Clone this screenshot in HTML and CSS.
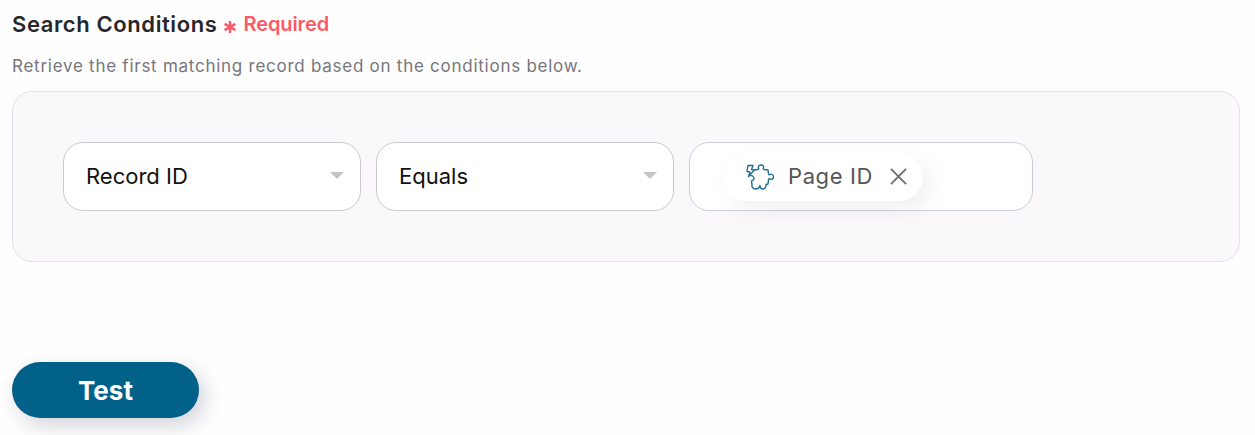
FILE: index.html
```html
<!DOCTYPE html>
<html lang="en">
<head>
<meta charset="utf-8">
<title>Search Conditions</title>
<link rel="stylesheet" href="styles.css">
</head>
<body>
<main class="page">
  <div class="heading">
    <h2 class="title">Search Conditions</h2>
    <span class="required"><svg class="asterisk" viewBox="0 0 14 14" aria-hidden="true"><path d="M7 1v12M1.600 3.900l10.800 6.200M12.400 3.900L1.600 10.100"/></svg>Required</span>
  </div>
  <p class="hint">Retrieve the first matching record based on the conditions below.</p>
  <section class="panel">
    <div class="select"><span>Record ID</span><i class="caret"></i></div>
    <div class="select"><span>Equals</span><i class="caret"></i></div>
    <div class="value">
      <div class="chip">
        <svg class="puzzle" viewBox="0 0 30 30" aria-hidden="true"><path d="M9.500 8L12.500 7.500C13.700 7.300 14 6.500 13.600 5.800C12.800 4.300 14.200 3 16 3C17.800 3 19.200 4.300 18.400 5.800C18 6.500 18.300 7.300 19.500 7.500L23 8L23.500 11.800C23.600 12.700 24.300 13 25 12.500C26.300 11.600 28.500 12.600 28.500 14.800C28.500 17 26.300 18 25 17C24.300 16.500 23.600 16.700 23.500 17.600L23 22L21 22.500C21.300 25 20 27 18 27C16 27 15 25.500 15 23.500C14.500 25.500 13 27 10.500 27C8 27 6.500 25 7 22.500L6.500 19C8.300 18.500 9.300 17 8.800 15.500C8.300 14 6.500 13.500 5.200 13.800"/><path d="M8 3.500H3L2 9.500L5 10L3.500 14.500L9.500 8L6.500 7.500Z"/></svg>
        <span class="chip-label">Page ID</span>
        <svg class="close" viewBox="0 0 20 20" aria-hidden="true"><path d="M2 2l16 16M18 2L2 18"/></svg>
      </div>
    </div>
  </section>
  <button class="test" type="button">Test</button>
</main>
</body>
</html>
```

FILE: styles.css
```css
* { box-sizing: border-box; }
html, body { margin: 0; height: 100%; }
body { background: #fefefe; font-family: Inter, "Liberation Sans", sans-serif; overflow: hidden; }
.page { width: 1255px; height: 435px; padding: 11px 15px 0 12px; }
.heading { display: flex; align-items: center; height: 26px; }
.title { margin: 0; font-size: 22px; font-weight: 600; color: #27272a; letter-spacing: 0.6px; line-height: 26px; }
.required { display: flex; align-items: center; margin-left: 6px; color: #fb5a66; font-size: 20px; font-weight: 600; letter-spacing: -0.1px; line-height: 26px; }
.asterisk { width: 14px; height: 14px; margin: 6px 6px 0 0; fill: none; stroke: #fb5a66; stroke-width: 2.400; }
.hint { margin: 18px 0 0; font-size: 17px; line-height: 22px; color: #77767b; letter-spacing: 0.74px; }
.panel { display: flex; gap: 15px; height: 171px; margin-top: 14px; padding: 50px; background: #faf8fb; border: 1px solid #e3e1e6; border-radius: 20px; }
.select { display: flex; align-items: center; justify-content: space-between; width: 298px; height: 69px; padding: 0 16px 2px 22px; background: #fff; border: 1px solid #cbc9ce; border-radius: 20px; font-size: 22px; color: #111; }
.caret { width: 0; height: 0; border-left: 7px solid transparent; border-right: 7px solid transparent; border-top: 7px solid #c4c4c6; }
.value { display: flex; align-items: center; width: 344px; height: 69px; padding-left: 33px; background: #fff; border: 1px solid #cdcdd8; border-radius: 20px; }
.chip { display: flex; align-items: center; width: 200px; height: 48px; padding-left: 22px; background: #fff; border-radius: 24px; box-shadow: 8px 8px 20px rgba(90, 85, 110, 0.09); }
.puzzle { width: 30px; height: 30px; fill: none; stroke: #1f6f91; stroke-width: 1.400; stroke-linejoin: round; }
.chip-label { margin: 0 0 2px 13px; font-size: 22px; color: #555; letter-spacing: 0.6px; }
.close { width: 19px; height: 19px; margin-left: 16px; fill: none; stroke: #707070; stroke-width: 2; }
.test { display: block; width: 187px; height: 56px; margin-top: 100px; padding: 0; border: 0; border-radius: 28px; background: #026188; color: #fff; font: 700 26px Inter, "Liberation Sans", sans-serif; box-shadow: 6px 8px 20px rgba(60, 65, 95, 0.22); }
```
